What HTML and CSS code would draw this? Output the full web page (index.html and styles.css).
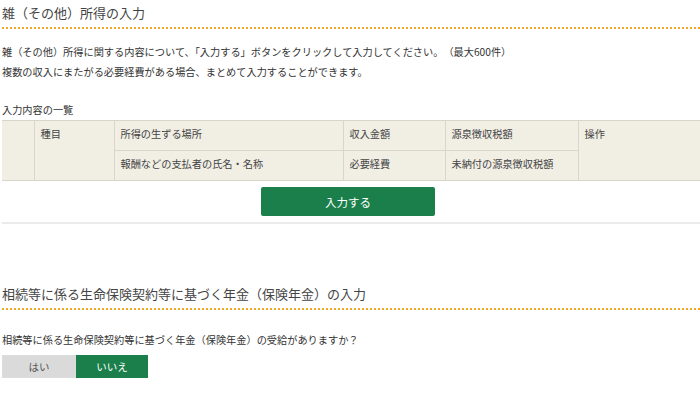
FILE: index.html
```html
<!DOCTYPE html>
<html lang="ja">
<head>
    <meta charset="UTF-8">
    <meta name="viewport" content="width=device-width, initial-scale=1.0">
    <title>雑（その他）所得の入力</title>
    <link rel="stylesheet" href="styles.css">
</head>
<body>
    <div class="page">
        <section class="block">
            <h2 class="section-title">雑（その他）所得の入力</h2>
            <p class="lead">雑（その他）所得に関する内容について、「入力する」ボタンをクリックして入力してください。　（最大600件）<br>
                複数の収入にまたがる必要経費がある場合、まとめて入力することができます。</p>

            <p class="list-caption">入力内容の一覧</p>
            <table class="entry-table">
                <colgroup>
                    <col style="width: 32px">
                    <col style="width: 80px">
                    <col style="width: 229px">
                    <col style="width: 102px">
                    <col style="width: 133px">
                    <col>
                </colgroup>
                <tr>
                    <th rowspan="2"></th>
                    <th rowspan="2">種目</th>
                    <th>所得の生ずる場所</th>
                    <th>収入金額</th>
                    <th>源泉徴収税額</th>
                    <th rowspan="2">操作</th>
                </tr>
                <tr>
                    <th>報酬などの支払者の氏名・名称</th>
                    <th>必要経費</th>
                    <th>未納付の源泉徴収税額</th>
                </tr>
            </table>
            <div class="actions">
                <button class="btn-primary">入力する</button>
            </div>
        </section>

        <section class="block second">
            <h2 class="section-title">相続等に係る生命保険契約等に基づく年金（保険年金）の入力</h2>
            <p class="question">相続等に係る生命保険契約等に基づく年金（保険年金）の受給がありますか？</p>
            <div class="toggle">
                <button class="toggle-btn">はい</button>
                <button class="toggle-btn active">いいえ</button>
            </div>
        </section>
    </div>
</body>
</html>
```

FILE: styles.css
```css
body {
    margin: 0;
    font-family: "Noto Sans CJK JP", "Noto Sans", sans-serif;
    color: #333;
    background-color: white;
    overflow: hidden;
}

.page {
    padding-left: 2px;
}

.section-title {
    margin: 0;
    padding: 4px 0 5px;
    font-size: 13px;
    line-height: 18px;
    font-weight: normal;
    color: #444;
    border-bottom: 2px dotted #f5a623;
}

.lead {
    margin: 13px 0 0;
    font-size: 10.2px;
    line-height: 20px;
}

.list-caption {
    margin: 18px 0 0;
    font-size: 10.2px;
    line-height: 20px;
}

.entry-table {
    width: 698px;
    border-collapse: collapse;
    table-layout: fixed;
    background-color: #f1eee4;
}

.entry-table th {
    height: 23px;
    padding: 6px 6px 0;
    border: 1px solid #d9d5cc;
    font-size: 10.2px;
    line-height: 14px;
    font-weight: normal;
    text-align: left;
    vertical-align: top;
    color: #444;
}

.entry-table tr:first-child th:first-child {
    border-left: none;
}

.entry-table th:last-child {
    border-right: none;
}

.actions {
    display: flex;
    justify-content: center;
    padding: 6px 6px 6px 0;
    border-bottom: 2px solid #ebebeb;
}

.btn-primary {
    width: 174px;
    height: 29px;
    background-color: #1a7f4b;
    color: white;
    border: none;
    border-radius: 2px;
    font-family: inherit;
    font-size: 11.5px;
    cursor: pointer;
}

.second {
    margin-top: 57px;
}

.question {
    margin: 20px 0 0;
    font-size: 10.2px;
    line-height: 20px;
}

.toggle {
    display: flex;
    margin-top: 5px;
}

.toggle-btn {
    width: 74px;
    height: 23px;
    border: 1px solid #dcdcdc;
    background-color: #dadada;
    color: #555;
    font-family: inherit;
    font-size: 10.5px;
    cursor: pointer;
}

.toggle-btn.active {
    width: 72px;
    border-color: #1a7f4b;
    background-color: #1a7f4b;
    color: white;
}
```
